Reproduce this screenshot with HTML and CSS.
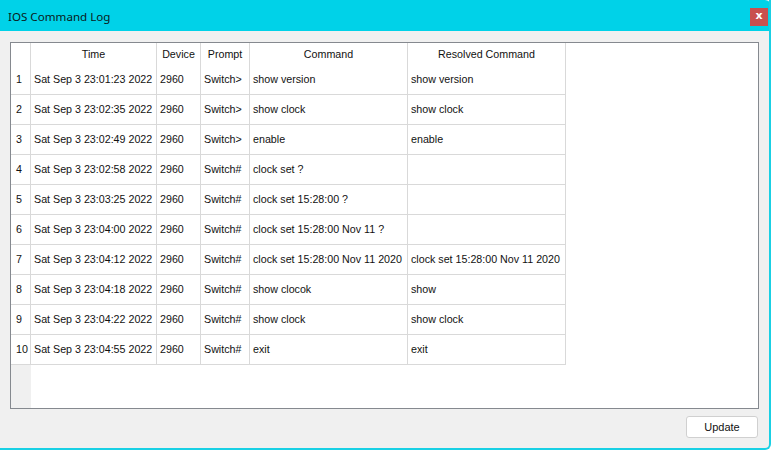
FILE: index.html
```html
<!DOCTYPE html>
<html>
<head>
<meta charset="utf-8">
<link rel="stylesheet" href="styles.css">
</head>
<body>
<div class="window">
  <div class="titlebar">
    <span class="title">IOS Command Log</span>
    <button class="close">x</button>
  </div>
  <div class="content">
    <div class="frame">
      <div class="grid">
        <div class="hc rn"></div>
        <div class="hc">Time</div>
        <div class="hc">Device</div>
        <div class="hc">Prompt</div>
        <div class="hc">Command</div>
        <div class="hc">Resolved Command</div>

        <div class="c rn">1</div><div class="c">Sat Sep 3 23:01:23 2022</div><div class="c">2960</div><div class="c">Switch&gt;</div><div class="c">show version</div><div class="c">show version</div>
        <div class="c rn">2</div><div class="c">Sat Sep 3 23:02:35 2022</div><div class="c">2960</div><div class="c">Switch&gt;</div><div class="c">show clock</div><div class="c">show clock</div>
        <div class="c rn">3</div><div class="c">Sat Sep 3 23:02:49 2022</div><div class="c">2960</div><div class="c">Switch&gt;</div><div class="c">enable</div><div class="c">enable</div>
        <div class="c rn">4</div><div class="c">Sat Sep 3 23:02:58 2022</div><div class="c">2960</div><div class="c">Switch#</div><div class="c">clock set ?</div><div class="c"></div>
        <div class="c rn">5</div><div class="c">Sat Sep 3 23:03:25 2022</div><div class="c">2960</div><div class="c">Switch#</div><div class="c">clock set 15:28:00 ?</div><div class="c"></div>
        <div class="c rn">6</div><div class="c">Sat Sep 3 23:04:00 2022</div><div class="c">2960</div><div class="c">Switch#</div><div class="c">clock set 15:28:00 Nov 11 ?</div><div class="c"></div>
        <div class="c rn">7</div><div class="c">Sat Sep 3 23:04:12 2022</div><div class="c">2960</div><div class="c">Switch#</div><div class="c">clock set 15:28:00 Nov 11 2020</div><div class="c">clock set 15:28:00 Nov 11 2020</div>
        <div class="c rn">8</div><div class="c">Sat Sep 3 23:04:18 2022</div><div class="c">2960</div><div class="c">Switch#</div><div class="c">show clocok</div><div class="c">show</div>
        <div class="c rn">9</div><div class="c">Sat Sep 3 23:04:22 2022</div><div class="c">2960</div><div class="c">Switch#</div><div class="c">show clock</div><div class="c">show clock</div>
        <div class="c rn">10</div><div class="c">Sat Sep 3 23:04:55 2022</div><div class="c">2960</div><div class="c">Switch#</div><div class="c">exit</div><div class="c">exit</div>
      </div>
    </div>
    <div class="actions">
      <button class="update">Update</button>
    </div>
  </div>
</div>
</body>
</html>
```

FILE: styles.css
```css
html, body {
  margin: 0;
  padding: 0;
  background: #ffffff;
}

body {
  font-family: "Liberation Sans", Arial, sans-serif;
  color: #111;
}

.window {
  width: 769px;
  height: 448px;
  background: #f0f0f0;
  border-right: 2px solid #19d0e4;
  border-bottom: 2px solid #19d0e4;
  border-bottom-right-radius: 6px;
  display: flex;
  flex-direction: column;
  overflow: hidden;
}

.titlebar {
  height: 31px;
  flex: none;
  background: #00d2e8;
  display: flex;
  align-items: center;
  justify-content: space-between;
  padding: 0 0 0 8px;
  margin-right: -2px;
  border-top-right-radius: 6px;
}

.title {
  font-family: "Noto Sans", "Open Sans", sans-serif;
  font-size: 11.6px;
  color: #0a1a20;
  margin-top: 1px;
}

.close {
  width: 18px;
  height: 18px;
  margin-top: 3px;
  margin-right: 3px;
  border: 0;
  padding: 0 0 2px 0;
  background: #c9504f;
  color: #ffffff;
  font-family: "DejaVu Sans", sans-serif;
  font-weight: bold;
  font-size: 11px;
  line-height: 14px;
}

.content {
  flex: 1;
  display: flex;
  flex-direction: column;
  padding: 11px 10px 0 10px;
}

.frame {
  width: 747px;
  height: 365px;
  border: 1px solid #85898f;
  background: linear-gradient(to right, #f0f0f0 20px, #ffffff 20px);
}

.grid {
  display: grid;
  grid-template-columns: 20px 126px 44px 49px 158px 158px;
  grid-template-rows: 22px repeat(10, 30px);
  font-size: 10.7px;
}

.hc, .c {
  box-sizing: border-box;
  background: #ffffff;
  border-right: 1px solid #d9d9d9;
  display: flex;
  align-items: center;
  white-space: nowrap;
  overflow: hidden;
}

.hc {
  justify-content: center;
  padding-bottom: 1px;
}

.c {
  border-bottom: 1px solid #d9d9d9;
  padding-left: 3px;
  padding-bottom: 1px;
}

.c.rn {
  padding-left: 5px;
}

.actions {
  display: flex;
  justify-content: flex-end;
  padding: 7px 1px 0 0;
}

.update {
  width: 72px;
  height: 22px;
  background: #ffffff;
  border: 1px solid #d0d0d0;
  border-radius: 3px;
  font-family: "Liberation Sans", Arial, sans-serif;
  font-size: 11px;
  color: #111;
  padding: 0;
}
```
